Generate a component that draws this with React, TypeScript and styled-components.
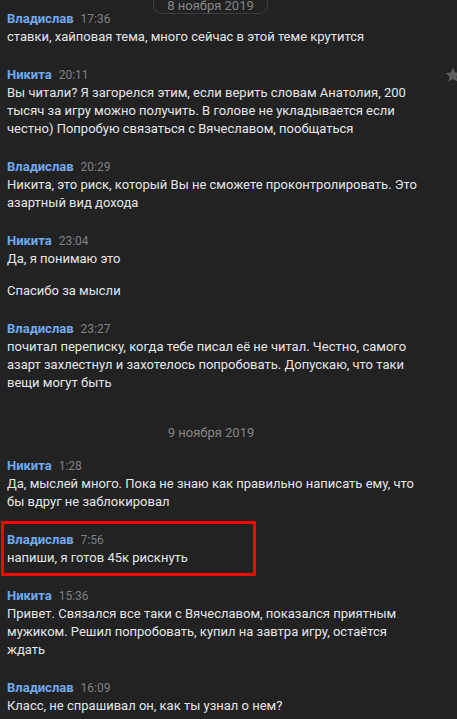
import styled, { createGlobalStyle } from "styled-components"

const GlobalStyle = createGlobalStyle`
  html, body {
    margin: 0;
    padding: 0;
    background: #222222;
  }
  body {
    font-family: Roboto, "Noto Sans", "Liberation Sans", sans-serif;
  }
`

const Page = styled.div`
  position: relative;
  width: 457px;
  height: 719px;
  overflow: hidden;
  background: #222222;
`

const History = styled.div`
  display: flex;
  flex-direction: column;
  width: 422px;
`

const Message = styled.div<{ $marked?: boolean }>`
  position: relative;
  display: flex;
  flex-direction: column;
  padding: 10px 0 10px 7px;

  ${({ $marked }) =>
    $marked &&
    `
    &::after {
      content: "";
      position: absolute;
      left: 1px;
      top: 0;
      width: 255px;
      height: 55px;
      box-sizing: border-box;
      border: 3px solid #ff0000;
      pointer-events: none;
    }
  `}
`

const Header = styled.div`
  display: flex;
  align-items: baseline;
  gap: 7px;
  line-height: 18px;
`

const Author = styled.span`
  font-size: 13px;
  font-weight: 700;
  color: #71aaeb;
`

const Time = styled.span`
  font-size: 12px;
  color: #7f8184;
`

const Text = styled.div<{ $gap?: number }>`
  margin-top: ${({ $gap = 0 }) => `${$gap}px`};
  font-size: 13px;
  line-height: 18px;
  color: #e4e6e9;
`

const DateDivider = styled.div`
  padding: 22px 0 5px;
  text-align: center;
  font-size: 13px;
  line-height: 18px;
  color: #858585;
`

// floating date of the day being scrolled
const StickyDate = styled.div`
  position: absolute;
  top: 0;
  left: 153px;
  width: 115px;
  height: 14px;
  box-sizing: border-box;
  border: 1px solid #3d3d3d;
  border-top: none;
  border-radius: 0 0 9px 9px;
  background: #222222;
  text-align: center;
  font-size: 13px;
  line-height: 12px;
  color: #858585;
`

const StarButton = styled.div`
  position: absolute;
  left: 445px;
  top: 67px;
  width: 16px;
  height: 16px;
  color: #5e5f61;
`

const Star = () => (
  <svg width="16" height="16" viewBox="0 0 16 16" fill="currentColor">
    <path d="M8 0.8l2.2 4.6 5 .6-3.7 3.5.95 5-4.45-2.45L3.55 14.5l.95-5L.8 6l5-.6z" />
  </svg>
)

type Msg = {
  author: string
  time: string
  lines: string[]
  marked?: boolean
}

const day1: Msg[] = [
  {
    author: "Владислав",
    time: "17:36",
    lines: ["ставки, хайповая тема, много сейчас в этой теме крутится"],
  },
  {
    author: "Никита",
    time: "20:11",
    lines: [
      "Вы читали? Я загорелся этим, если верить словам Анатолия, 200 тысяч за игру можно получить. В голове не укладывается если честно) Попробую связаться с Вячеславом, пообщаться",
    ],
  },
  {
    author: "Владислав",
    time: "20:29",
    lines: [
      "Никита, это риск, который Вы не сможете проконтролировать. Это азартный вид дохода",
    ],
  },
  {
    author: "Никита",
    time: "23:04",
    lines: ["Да, я понимаю это", "Спасибо за мысли"],
  },
  {
    author: "Владислав",
    time: "23:27",
    lines: [
      "почитал переписку, когда тебе писал её не читал. Честно, самого азарт захлестнул и захотелось попробовать. Допускаю, что таки вещи могут быть",
    ],
  },
]

const day2: Msg[] = [
  {
    author: "Никита",
    time: "1:28",
    lines: [
      "Да, мыслей много. Пока не знаю как правильно написать ему, что бы вдруг не заблокировал",
    ],
  },
  {
    author: "Владислав",
    time: "7:56",
    lines: ["напиши, я готов 45к рискнуть"],
    marked: true,
  },
  {
    author: "Никита",
    time: "15:36",
    lines: [
      "Привет. Связался все таки с Вячеславом, показался приятным мужиком. Решил попробовать, купил на завтра игру, остаётся ждать",
    ],
  },
  {
    author: "Владислав",
    time: "16:09",
    lines: ["Класс, не спрашивал он, как ты узнал о нем?"],
  },
]

const MessageItem = ({ m }: { m: Msg }) => (
  <Message $marked={m.marked}>
    <Header>
      <Author>{m.author}</Author>
      <Time>{m.time}</Time>
    </Header>
    {m.lines.map((line, j) => (
      <Text key={j} $gap={j > 0 ? 14 : 0}>
        {line}
      </Text>
    ))}
  </Message>
)

export default function App() {
  return (
    <>
      <GlobalStyle />
      <Page>
        <History>
          {day1.map((m) => (
            <MessageItem key={m.time} m={m} />
          ))}
          <DateDivider>9 ноября 2019</DateDivider>
          {day2.map((m) => (
            <MessageItem key={m.time} m={m} />
          ))}
        </History>
        <StickyDate>8 ноября 2019</StickyDate>
        <StarButton>
          <Star />
        </StarButton>
      </Page>
    </>
  )
}
